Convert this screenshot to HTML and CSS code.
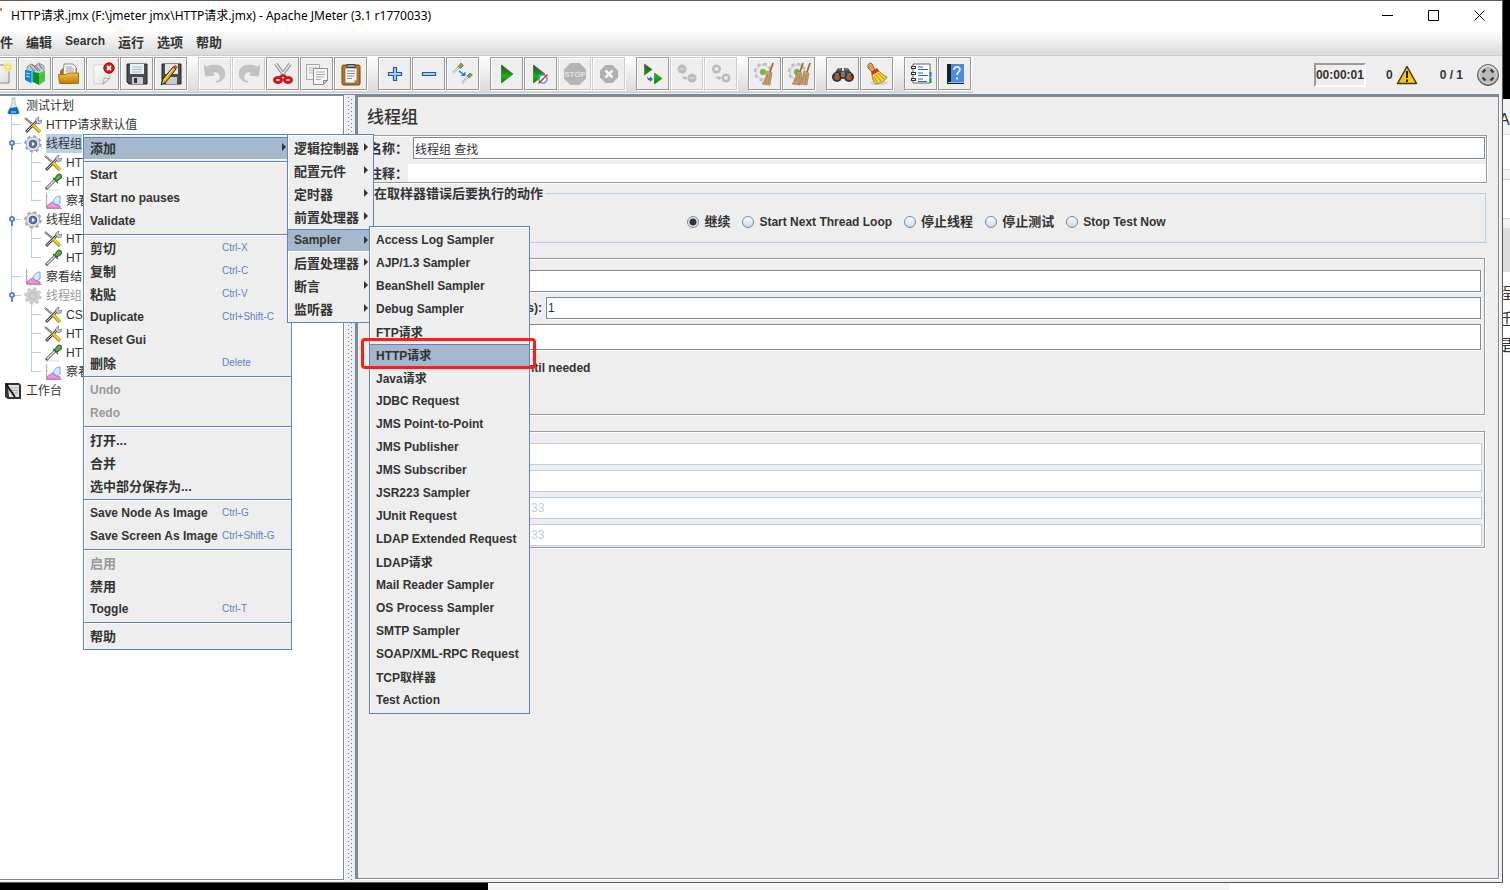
FILE: index.html
```html
<!DOCTYPE html>
<html lang="zh-CN">
<head>
  <meta charset="UTF-8">
  <meta name="viewport" content="width=device-width, initial-scale=1.0">
  <title>Apache JMeter</title>
  <link rel="stylesheet" href="styles.css">
</head>
<body>
  <svg class="sprite" aria-hidden="true">
    <defs>
      <linearGradient id="gGreen" x1="0" y1="0" x2="0" y2="1"><stop offset="0" stop-color="#1f5c22"/><stop offset=".5" stop-color="#2f8a2a"/><stop offset=".6" stop-color="#0cc40c"/><stop offset="1" stop-color="#067a06"/></linearGradient>
      <linearGradient id="gFolder" x1="0" y1="0" x2="0" y2="1"><stop offset="0" stop-color="#f0c14a"/><stop offset="1" stop-color="#b87a08"/></linearGradient>
      <linearGradient id="gPaper" x1="0" y1="0" x2="1" y2="1"><stop offset="0" stop-color="#fff"/><stop offset="1" stop-color="#dcdcdc"/></linearGradient>
      <linearGradient id="gMetal" x1="0" y1="0" x2="0" y2="1"><stop offset="0" stop-color="#e4e4e4"/><stop offset="1" stop-color="#777"/></linearGradient>
      <pattern id="bumps" width="6" height="4" patternUnits="userSpaceOnUse"><path d="M0 0h1v1H0zM3 2h1v1H3z" fill="#7a8a99"/></pattern>
    </defs>

    <symbol id="new" viewBox="0 0 24 24">
      <path d="M3 3h17v18H3z" fill="url(#gPaper)" stroke="#888"/>
      <circle cx="19" cy="5" r="4.500" fill="#f6ec86"/><circle cx="19" cy="5" r="2" fill="#fff" stroke="#e6cf3c"/>
    </symbol>
    <symbol id="templates" viewBox="0 0 24 24">
      <path d="M4 5l4-3 4 2 4-3 5 3v8H4z" fill="#c5cacc" stroke="#868e92"/>
      <path d="M7 4l4 5M12 3l5 6M9 2l6 7M16 2l3 5" stroke="#6f777b" fill="none"/>
      <path d="M2 8l6 1v12l-6-3z" fill="#0c84cf"/><path d="M8 9l4-2v12l-4 2z" fill="#40b4ee"/>
      <path d="M3 11l4 1M3 14l4 1" stroke="#bde6fa"/>
      <path d="M10 10l6 1v12l-6-3z" fill="#148a20"/><path d="M16 11l6-2v10l-6 4z" fill="#49c640"/>
    </symbol>
    <symbol id="open" viewBox="0 0 24 24">
      <path d="M3 9l3-3h14v12H3z" fill="#a97008"/>
      <path d="M7 2h9l3 3v9H6z" fill="#fafafa" stroke="#888"/>
      <path d="M9 5h6M9 7h8M8 9h9" stroke="#999"/>
      <path d="M1.500 12.500h7l2-1.500h11v10.500h-19z" fill="url(#gFolder)" stroke="#a97008"/>
    </symbol>
    <symbol id="close" viewBox="0 0 24 24">
      <path d="M3 3h16v13l-6 6H3z" fill="url(#gPaper)" stroke="#c4c4c4" stroke-width=".7"/>
      <path d="M12 22c1-2 1-4 1-6 2 1 4 1 6 0z" fill="#fff" stroke="#888" stroke-width=".7"/>
      <circle cx="18" cy="6" r="5.200" fill="#cf2018" stroke="#961009"/>
      <path d="M16 4l4 4M20 4l-4 4" stroke="#fff" stroke-width="1.800"/>
    </symbol>
    <symbol id="save" viewBox="0 0 24 24">
      <path d="M2 2h20v20H4l-2-2z" fill="#4a4e52" stroke="#26282a"/>
      <path d="M5 2h14v10H5z" fill="#e9f0f7"/><path d="M7 5h10M7 7.500h10M7 10h10" stroke="#a8bccf"/>
      <path d="M7 15h11v7H7z" fill="#c8cacc"/><path d="M9 16h3v5H9z" fill="#333"/>
    </symbol>
    <symbol id="saveAs" viewBox="0 0 24 24">
      <path d="M3 2h19v20H4l-1-2z" fill="#4a4e52" stroke="#26282a"/>
      <path d="M6 2h13v10H6z" fill="#dfe5ea"/><path d="M7 15h11v7H7z" fill="#c8cacc"/>
      <path d="M2 23l2-6L14 5l3 2L7 20z" fill="#e4ae16" stroke="#3c2b08"/>
      <path d="M14 5l2-2 3 2-2 2z" fill="#d63c22"/><path d="M5 18l9-11" stroke="#fbe38a"/>
    </symbol>
    <symbol id="undo" viewBox="0 0 24 24">
      <path d="M1.500 3l2 2.500C7 3 12 2.500 17 4c5 2 6 9 3 13-2 2-4 3-7 3 4-2 5-4 4-7-1-3-5-4-8-2l2.500 2-9 1z" fill="#c3c3c3" stroke="#b4b4b4" stroke-width=".7"/>
    </symbol>
    <symbol id="cut" viewBox="0 0 24 24">
      <path d="M5 2l10 14M19 2L9 16" stroke="#888" stroke-width="3.500"/><path d="M5 2l10 14M19 2L9 16" stroke="#e8e8e8" stroke-width="1.500"/>
      <path d="M9 15l3-2 3 2" fill="none" stroke="#c51017" stroke-width="2"/>
      <ellipse cx="7" cy="18" rx="3.500" ry="2.500" fill="none" stroke="#d3141b" stroke-width="3"/><ellipse cx="17" cy="18" rx="3.500" ry="2.500" fill="none" stroke="#d3141b" stroke-width="3"/>
    </symbol>
    <symbol id="copy" viewBox="0 0 24 24">
      <path d="M1.500 2.500h13v15h-13z" fill="#f1f1f1" stroke="#aaa"/><path d="M4 6h8M4 8.500h5M4 11h4" stroke="#bbb"/>
      <path d="M8.500 6.500h14v12l-4 4h-10z" fill="#f7f7f7" stroke="#8f8f8f"/><path d="M11 10h9M11 12.500h9M11 15h8M11 17.500h5" stroke="#aaa"/>
      <path d="M18.500 22.500v-4h4z" fill="#ccc" stroke="#888"/>
    </symbol>
    <symbol id="paste" viewBox="0 0 24 24">
      <rect x="3" y="3" width="18" height="20" rx="1.500" fill="#b9781c" stroke="#6e4508"/>
      <path d="M6 6h12v12l-3 3H6z" fill="#f6f6f6" stroke="#666" stroke-width=".7"/>
      <path d="M8 9h8M8 11.500h8M8 14h7M8 16.500h5" stroke="#888"/><path d="M15 21v-3h3z" fill="#bbb"/>
      <path d="M8 2.500h8v3H8z" fill="#999" stroke="#444"/>
    </symbol>
    <symbol id="plus" viewBox="0 0 24 24"><path d="M10.500 5.500h3v5h5v3h-5v5h-3v-5h-5v-3h5z" fill="#a9d3f5" stroke="#28589c" stroke-width="1.200"/></symbol>
    <symbol id="minus" viewBox="0 0 24 24"><path d="M5.500 10.500h13v3h-13z" fill="#a9d3f5" stroke="#28589c" stroke-width="1.200"/></symbol>
    <symbol id="toggle" viewBox="0 0 24 24">
      <path d="M2 11l6-6" stroke="#aaa" stroke-width="2.200"/><path d="M2 11l6-6" stroke="#f4f4f4"/>
      <path d="M7 4.500l3-3.500 2.500 2.500-3 3z" fill="#74a860" stroke="#4c7e3c" stroke-width=".7"/>
      <path d="M11 21l6-6" stroke="#aaa" stroke-width="2.200"/><path d="M11 21l6-6" stroke="#f4f4f4"/><path d="M16 14l3-3 2.500 2-3.500 3z" fill="#74a860" stroke="#4c7e3c" stroke-width=".7"/>
      <path d="M8 9l4 3" stroke="#2178f0" stroke-width="1.500"/><path d="M14.500 9.500v4.500h-5z" fill="#2178f0"/>
    </symbol>
    <symbol id="start" viewBox="0 0 24 24"><path d="M6.500 3v18L18 12z" fill="url(#gGreen)" stroke="#146414" stroke-width=".6"/></symbol>
    <symbol id="startNoPause" viewBox="0 0 24 24">
      <path d="M4.500 3v18L16 12z" fill="url(#gGreen)" stroke="#146414" stroke-width=".6"/>
      <circle cx="14" cy="17" r="4" fill="#fff" stroke="#5c9bdc" stroke-width="1.600"/><path d="M9.500 21.500l9-9" stroke="#cf2830" stroke-width="1.500"/>
    </symbol>
    <symbol id="shutdown" viewBox="0 0 24 24">
      <path d="M8.500 3h7L21 8.500v7L15.500 21h-7L3 15.500v-7z" fill="#b0b0b0"/><path d="M8.500 8.500l7 7M15.500 8.500l-7 7" stroke="#f4f4f4" stroke-width="2.600"/>
    </symbol>
    <symbol id="remoteStart" viewBox="0 0 24 24">
      <path d="M3.500 2v11l7.500-5.500zM13.500 11v11l7.500-5.500z" fill="url(#gGreen)" stroke="#146414" stroke-width=".5"/>
      <path d="M6 14l1 2h2v-1.500l3 2.500-3 3v-1.500c-2 0-3-1.500-3-4.500z" fill="#3d68b4"/>
    </symbol>
    <symbol id="remoteStop" viewBox="0 0 24 24">
      <circle cx="7" cy="7" r="4.500" fill="#bcbcbc"/><circle cx="17" cy="16" r="4.500" fill="#bcbcbc"/>
      <path d="M4.500 7h5M14.500 16h5" stroke="#d0d0d0" stroke-width="2"/><path d="M7 13l1 2h2v-1l2.500 2-2.500 2v-1c-2 0-3-1-3-4z" fill="#b6b6b6"/>
    </symbol>
    <symbol id="remoteShut" viewBox="0 0 24 24">
      <circle cx="7.500" cy="7" r="4.500" fill="#bcbcbc"/><circle cx="17" cy="16" r="4.500" fill="#bcbcbc"/>
      <path d="M6 5.500l3 3M9 5.500l-3 3M15.500 14.500l3 3M18.500 14.500l-3 3" stroke="#f2f2f2" stroke-width="1.500"/><path d="M7 13l1 2h2v-1l2.500 2-2.500 2v-1c-2 0-3-1-3-4z" fill="#b6b6b6"/>
    </symbol>
    <symbol id="gearGrey" viewBox="0 0 24 24">
      <circle cx="10" cy="10" r="7.500" fill="none" stroke="#bdbdbd" stroke-width="3.500" stroke-dasharray="3.200 2.690"/>
      <circle cx="10" cy="10" r="7" fill="#ececec" stroke="#c4c4c4"/><circle cx="10" cy="10" r="3" fill="#6bc41c" stroke="#a8a8a8" stroke-width=".7"/>
    </symbol>
    <symbol id="broomBrown" viewBox="0 0 24 24">
      <path d="M20 1l-3 9" stroke="#a56b34" stroke-width="1.800"/>
      <path d="M14 9l5 2-2 12-8-1c3-3 4-7 5-13z" fill="#c8a172" stroke="#8d6437" stroke-width=".5"/>
      <path d="M15 12l-3 9M17 12l-2 10" stroke="#a47c4a" stroke-width=".8"/>
    </symbol>
    <symbol id="clear" viewBox="0 0 24 24"><use href="#gearGrey"/><use href="#broomBrown"/></symbol>
    <symbol id="clearAll" viewBox="0 0 24 24"><use href="#gearGrey"/><use href="#broomBrown" x="-4"/><use href="#broomBrown" x="3"/></symbol>
    <symbol id="search" viewBox="0 0 24 24">
      <path d="M7 6h4v3h2V6h4l4 6v5H3v-5z" fill="#4a4a4a"/>
      <circle cx="6" cy="15" r="5" fill="#353535"/><circle cx="18" cy="15" r="5" fill="#353535"/>
      <circle cx="6" cy="15.500" r="2.700" fill="#a9592c"/><circle cx="18" cy="15.500" r="2.700" fill="#a9592c"/>
      <path d="M7 7h3M14 7h3M4 12h4M16 12h4" stroke="#aaa"/><path d="M10 10h4v5h-4z" fill="#777"/>
    </symbol>
    <symbol id="searchReset" viewBox="0 0 24 24">
      <ellipse cx="14" cy="21" rx="9" ry="2" fill="#d2d2d2"/>
      <path d="M3 3c1-3 5-2 5 1l2 4-3 2-4-4z" fill="#dca04c" stroke="#93601d"/>
      <path d="M7 12l6-4c3 3 5 5 9 7-2 4-6 6-11 7-3-3-4-6-4-10z" fill="#f2d13b" stroke="#a78313"/>
      <path d="M6 10l6-4 2 3-7 4z" fill="#d92c26"/><path d="M11 13l5 6M13 11l6 6M9 15l3 5" stroke="#b08c18"/>
    </symbol>
    <symbol id="funcHelper" viewBox="0 0 24 24">
      <path d="M4 2h17v19H4z" fill="#fff" stroke="#666"/>
      <path d="M2 5.500h5M2 11.500h5M2 17.500h5" stroke="#333" stroke-width="2.800"/><path d="M3 5.500h3M3 11.500h3M3 17.500h3" stroke="#fff"/>
      <path d="M9 5h5M9 7.500h10M9 11h5M9 13.500h10M9 17h5M9 19.500h9" stroke="#1d66cb"/>
      <path d="M21.500 10v5" stroke="#2b73e0" stroke-width="2"/><path d="M21.500 16v5" stroke="#169a2b" stroke-width="2"/>
    </symbol>
    <symbol id="help" viewBox="0 0 24 24">
      <path d="M4 2h17v20H4z" fill="#1c2024"/><path d="M8 2h13v18H8z" fill="#4c8ddf"/><path d="M5 20.500h16" stroke="#9fb9dc"/>
      <path d="M11 8c0-4 6-4 6-.5 0 2.500-3 2.500-3 5.500M14 15.500v2" fill="none" stroke="#e8f2fd" stroke-width="1.700"/>
    </symbol>
    <symbol id="warning" viewBox="0 0 22 20">
      <path d="M11 1.500l9.500 17h-19z" fill="#f8c80c" stroke="#3c3520" stroke-width="1.500" stroke-linejoin="round"/>
      <path d="M11 6v7M11 14.500v2.500" stroke="#222" stroke-width="2"/>
    </symbol>
    <symbol id="remoteState" viewBox="0 0 24 24">
      <circle cx="12" cy="12" r="10.500" fill="url(#gMetal)" stroke="#5f5f5f"/><circle cx="12" cy="12" r="8.500" fill="#b9b9b9" stroke="#ddd"/>
      <path d="M6.500 9.500l3-3M14.500 6.500l3 3M17.500 14.500l-3 3M9.500 17.500l-3-3" stroke="#3c3c3c" stroke-width="2.400"/>
    </symbol>

    <symbol id="flask" viewBox="0 0 18 18">
      <path d="M8 1v6L4 14.500C3.500 16 4 17 5 17h9c1 0 1.500-1 1-2.500L11 7V1z" fill="#e3e9f0" stroke="#a0abb8" stroke-width=".8"/>
      <path d="M6 11l7-1 2 5c0 1-.5 2-1.500 2h-8c-1 0-2-1-1.500-2z" fill="#1767c8"/><path d="M7 15h5" stroke="#51b4f5" stroke-width="2"/>
    </symbol>
    <symbol id="tools" viewBox="0 0 18 18">
      <path d="M2 16L13 5" stroke="#444" stroke-width="2.800"/><path d="M2.500 15.500L13 5" stroke="#ccc"/>
      <path d="M12 6c-1-2 0-4 3-5l-1 3 1 1 3-1c0 3-2 4-4 3.500z" fill="#ccc" stroke="#555" stroke-width=".6"/>
      <path d="M1 2l7 6" stroke="#555" stroke-width="2"/><path d="M1 2l7 6" stroke="#ddd" stroke-width=".8"/>
      <path d="M9 9l7 7" stroke="#b88a0a" stroke-width="3.600"/><path d="M9 8.500l7 7" stroke="#f3cc26" stroke-width="2"/>
    </symbol>
    <symbol id="gear" viewBox="0 0 18 18">
      <circle cx="9" cy="9" r="7.300" fill="none" stroke="#a4aab1" stroke-width="3" stroke-dasharray="3 2.730"/>
      <circle cx="9" cy="9" r="6.800" fill="#e2e4e7" stroke="#a9afb6"/><circle cx="9" cy="9" r="3.800" fill="#5c7fae" stroke="#3c557a"/><path d="M8 7v4l3-2z" fill="#fff"/>
    </symbol>
    <symbol id="gearOff" viewBox="0 0 18 18">
      <circle cx="9" cy="9" r="7.300" fill="none" stroke="#c8c8c8" stroke-width="3" stroke-dasharray="3 2.730"/>
      <circle cx="9" cy="9" r="7" fill="#cecece"/><circle cx="9" cy="9" r="3.500" fill="#d0d0d0" stroke="#b8b8b8"/>
    </symbol>
    <symbol id="pipette" viewBox="0 0 18 18">
      <path d="M1 17h14" stroke="#ddd"/><path d="M2 16L11 7" stroke="#555" stroke-width="3"/><path d="M3 15l8-8" stroke="#e8e8e8" stroke-width="1.400"/>
      <path d="M9 5l5 5M10.500 6l3-4c2-2 5 0 3.500 3l-4 3z" fill="#64ac57" stroke="#2f6a2c" stroke-width="1.200"/>
    </symbol>
    <symbol id="graph" viewBox="0 0 18 18">
      <path d="M2.500 1v15.500H18" fill="none" stroke="#aaa"/><path d="M1 4h3M1 8h3M1 12h3M7 15v3M11 15v3M15 15v3" stroke="#ccc"/>
      <path d="M3 14l5-4 4 3 4 1v2H3z" fill="#ef97da" stroke="#cf62b7"/><path d="M9 10c1-4 4-6 7-6v7l-3 2z" fill="#d6ebfb" stroke="#74a8dc"/>
    </symbol>
    <symbol id="workbench" viewBox="0 0 18 18">
      <path d="M1 1h14l2 2v14H4l-3-2z" fill="#333"/><path d="M4 3h11v12H5z" fill="#dfe2e5"/>
      <path d="M7 6h7M7 8.500h7M8 11h6" stroke="#aab"/><path d="M2 2l9 13" stroke="#111" stroke-width="1.800"/>
    </symbol>
    <symbol id="handle" viewBox="0 0 11 19">
      <path d="M3 11v5" stroke="#6382bf" stroke-width="2"/><circle cx="3" cy="9" r="2" fill="#fff" stroke="#6382bf" stroke-width="2"/>
    </symbol>
  </svg>

  <div class="window">
    <header class="title-bar">
      <span class="app-speck"></span>
      <h1>HTTP请求.jmx (F:\jmeter jmx\HTTP请求.jmx) - Apache JMeter (3.1 r1770033)</h1>
      <div class="window-controls">
        <button aria-label="Minimize"><svg viewBox="0 0 11 11"><path d="M0 5.500h11"/></svg></button>
        <button aria-label="Maximize"><svg viewBox="0 0 11 11"><path d="M.5.5h10v10H.5z"/></svg></button>
        <button aria-label="Close"><svg viewBox="0 0 11 11"><path d="M.5.500l10 10M10.500.5l-10 10"/></svg></button>
      </div>
    </header>

    <nav class="menu-bar">
      <button class="zh">件</button>
      <button class="zh">编辑</button>
      <button>Search</button>
      <button class="zh">运行</button>
      <button class="zh">选项</button>
      <button class="zh">帮助</button>
    </nav>

    <div class="tool-row">
      <div class="toolbar">
        <div class="tool-group">
          <button aria-label="New"><svg><use href="#new"/></svg></button>
          <button aria-label="Templates"><svg><use href="#templates"/></svg></button>
          <button aria-label="Open"><svg><use href="#open"/></svg></button>
          <button aria-label="Close plan"><svg><use href="#close"/></svg></button>
          <button aria-label="Save"><svg><use href="#save"/></svg></button>
          <button aria-label="Save as"><svg><use href="#saveAs"/></svg></button>
        </div>
        <div class="tool-group">
          <button aria-label="Undo" disabled><svg><use href="#undo"/></svg></button>
          <button aria-label="Redo" disabled><svg class="flip"><use href="#undo"/></svg></button>
          <button aria-label="Cut"><svg><use href="#cut"/></svg></button>
          <button aria-label="Copy"><svg><use href="#copy"/></svg></button>
          <button aria-label="Paste"><svg><use href="#paste"/></svg></button>
        </div>
        <div class="tool-group">
          <button aria-label="Expand all"><svg><use href="#plus"/></svg></button>
          <button aria-label="Collapse all"><svg><use href="#minus"/></svg></button>
          <button aria-label="Toggle"><svg><use href="#toggle"/></svg></button>
        </div>
        <div class="tool-group">
          <button aria-label="Start"><svg><use href="#start"/></svg></button>
          <button aria-label="Start no pauses"><svg><use href="#startNoPause"/></svg></button>
          <button aria-label="Stop" disabled>
            <svg viewBox="0 0 24 24">
              <path d="M7.500 1h9L23 7.500v9L16.500 23h-9L1 16.500v-9z" fill="#b5b5b5"/>
              <text x="12" y="15" text-anchor="middle" class="stop-text">STOP</text>
            </svg>
          </button>
          <button aria-label="Shutdown" disabled><svg><use href="#shutdown"/></svg></button>
        </div>
        <div class="tool-group">
          <button aria-label="Remote start all"><svg><use href="#remoteStart"/></svg></button>
          <button aria-label="Remote stop all" disabled><svg><use href="#remoteStop"/></svg></button>
          <button aria-label="Remote shutdown all" disabled><svg><use href="#remoteShut"/></svg></button>
        </div>
        <div class="tool-group">
          <button aria-label="Clear"><svg><use href="#clear"/></svg></button>
          <button aria-label="Clear all"><svg><use href="#clearAll"/></svg></button>
        </div>
        <div class="tool-group">
          <button aria-label="Search"><svg><use href="#search"/></svg></button>
          <button aria-label="Reset search"><svg><use href="#searchReset"/></svg></button>
        </div>
        <div class="tool-group">
          <button aria-label="Function helper"><svg><use href="#funcHelper"/></svg></button>
          <button aria-label="Help"><svg><use href="#help"/></svg></button>
        </div>
      </div>
      <div class="status">
        <span class="timer">00:00:01</span>
        <span class="errors">0 <svg><use href="#warning"/></svg></span>
        <span class="threads">0 / 1</span>
        <svg class="remote-state"><use href="#remoteState"/></svg>
      </div>
    </div>

    <div class="split">
      <ul class="tree">
        <li><svg class="node"><use href="#flask"/></svg><span>测试计划</span></li>
        <li class="child"><i class="guide tee"></i><svg class="node"><use href="#tools"/></svg><span>HTTP请求默认值</span></li>
        <li class="child"><i class="guide tee"><svg><use href="#handle"/></svg></i><svg class="node"><use href="#gear"/></svg><span class="selected">线程组</span></li>
        <li class="child"><i class="guide pass"></i><i class="guide tee"></i><svg class="node"><use href="#tools"/></svg><span>HTTP</span></li>
        <li class="child"><i class="guide pass"></i><i class="guide tee"></i><svg class="node"><use href="#pipette"/></svg><span>HTTP</span></li>
        <li class="child"><i class="guide pass"></i><i class="guide last"></i><svg class="node"><use href="#graph"/></svg><span>察看</span></li>
        <li class="child"><i class="guide tee"><svg><use href="#handle"/></svg></i><svg class="node"><use href="#gear"/></svg><span>线程组</span></li>
        <li class="child"><i class="guide pass"></i><i class="guide tee"></i><svg class="node"><use href="#tools"/></svg><span>HTTP</span></li>
        <li class="child"><i class="guide pass"></i><i class="guide last"></i><svg class="node"><use href="#pipette"/></svg><span>HTTP</span></li>
        <li class="child"><i class="guide tee"></i><svg class="node"><use href="#graph"/></svg><span>察看结</span></li>
        <li class="child"><i class="guide last"><svg><use href="#handle"/></svg></i><svg class="node"><use href="#gearOff"/></svg><span class="off">线程组</span></li>
        <li class="child"><i class="guide pass none"></i><i class="guide tee"></i><svg class="node"><use href="#tools"/></svg><span>CSV</span></li>
        <li class="child"><i class="guide pass none"></i><i class="guide tee"></i><svg class="node"><use href="#tools"/></svg><span>HTTP</span></li>
        <li class="child"><i class="guide pass none"></i><i class="guide tee"></i><svg class="node"><use href="#pipette"/></svg><span>HTTP</span></li>
        <li class="child"><i class="guide pass none"></i><i class="guide last"></i><svg class="node"><use href="#graph"/></svg><span>察看</span></li>
        <li><svg class="node"><use href="#workbench"/></svg><span>工作台</span></li>
      </ul>

      <div class="divider"><svg><rect width="5" height="100%" fill="url(#bumps)"/></svg></div>

      <main class="editor">
        <h2>线程组</h2>
        <div class="name-panel">
          <div class="name-row">
            <label for="name">名称：</label>
            <input type="text" id="name" value="线程组 查找">
          </div>
          <div class="comment-row">
            <label for="comment">注释：</label>
            <input type="text" id="comment">
          </div>
        </div>

        <fieldset class="on-error">
          <legend>在取样器错误后要执行的动作</legend>
          <div class="radios">
            <label class="zh"><input type="radio" name="onError" checked>继续</label>
            <label><input type="radio" name="onError">Start Next Thread Loop</label>
            <label class="zh"><input type="radio" name="onError">停止线程</label>
            <label class="zh"><input type="radio" name="onError">停止测试</label>
            <label><input type="radio" name="onError">Stop Test Now</label>
          </div>
        </fieldset>

        <section class="group threads-group">
          <div class="field"><input type="text" aria-label="线程数"></div>
          <div class="field"><label for="ramp">Ramp-Up Period (in seconds):</label><input type="text" id="ramp" value="1"></div>
          <div class="field tall"><input type="text" aria-label="循环次数"></div>
          <label class="check"><input type="checkbox">Delay Thread creation until needed</label>
        </section>

        <section class="group schedule-group">
          <input type="text" aria-label="Duration" disabled>
          <input type="text" aria-label="Startup delay" disabled>
          <input type="text" aria-label="Start time" value="33" disabled>
          <input type="text" aria-label="End time" value="33" disabled>
        </section>
      </main>
    </div>
  </div>

  <aside class="behind-right">
    <div class="black"></div>
    <div class="tab">A</div>
    <div class="blank"></div>
    <div class="bar"></div>
    <div class="box"></div>
    <div class="thumb"></div>
    <p>程</p>
    <p>迁</p>
    <p>是</p>
  </aside>
  <div class="behind-bottom"></div>

  <ul class="popup context-menu">
    <li><button class="zh active more">添加</button></li>
    <li class="sep"></li>
    <li><button>Start</button></li>
    <li><button>Start no pauses</button></li>
    <li><button>Validate</button></li>
    <li class="sep"></li>
    <li><button class="zh">剪切<kbd>Ctrl-X</kbd></button></li>
    <li><button class="zh">复制<kbd>Ctrl-C</kbd></button></li>
    <li><button class="zh">粘贴<kbd>Ctrl-V</kbd></button></li>
    <li><button>Duplicate<kbd>Ctrl+Shift-C</kbd></button></li>
    <li><button>Reset Gui</button></li>
    <li><button class="zh">删除<kbd>Delete</kbd></button></li>
    <li class="sep"></li>
    <li><button disabled>Undo</button></li>
    <li><button disabled>Redo</button></li>
    <li class="sep"></li>
    <li><button class="zh">打开...</button></li>
    <li><button class="zh">合并</button></li>
    <li><button class="zh">选中部分保存为...</button></li>
    <li class="sep"></li>
    <li><button>Save Node As Image<kbd>Ctrl-G</kbd></button></li>
    <li><button>Save Screen As Image<kbd>Ctrl+Shift-G</kbd></button></li>
    <li class="sep"></li>
    <li><button class="zh" disabled>启用</button></li>
    <li><button class="zh">禁用</button></li>
    <li><button>Toggle<kbd>Ctrl-T</kbd></button></li>
    <li class="sep"></li>
    <li><button class="zh">帮助</button></li>
  </ul>

  <ul class="popup add-menu">
    <li><button class="zh more">逻辑控制器</button></li>
    <li><button class="zh more">配置元件</button></li>
    <li><button class="zh more">定时器</button></li>
    <li><button class="zh more">前置处理器</button></li>
    <li><button class="more active">Sampler</button></li>
    <li><button class="zh more">后置处理器</button></li>
    <li><button class="zh more">断言</button></li>
    <li><button class="zh more">监听器</button></li>
  </ul>

  <ul class="popup sampler-menu">
    <li><button>Access Log Sampler</button></li>
    <li><button>AJP/1.3 Sampler</button></li>
    <li><button>BeanShell Sampler</button></li>
    <li><button>Debug Sampler</button></li>
    <li><button>FTP请求</button></li>
    <li><button class="active">HTTP请求</button></li>
    <li><button>Java请求</button></li>
    <li><button>JDBC Request</button></li>
    <li><button>JMS Point-to-Point</button></li>
    <li><button>JMS Publisher</button></li>
    <li><button>JMS Subscriber</button></li>
    <li><button>JSR223 Sampler</button></li>
    <li><button>JUnit Request</button></li>
    <li><button>LDAP Extended Request</button></li>
    <li><button>LDAP请求</button></li>
    <li><button>Mail Reader Sampler</button></li>
    <li><button>OS Process Sampler</button></li>
    <li><button>SMTP Sampler</button></li>
    <li><button>SOAP/XML-RPC Request</button></li>
    <li><button>TCP取样器</button></li>
    <li><button>Test Action</button></li>
  </ul>
  <div class="highlight"></div>
</body>
</html>
```
FILE: styles.css
```css
* {
    box-sizing: border-box;
}

body {
    margin: 0;
    height: 100vh;
    overflow: hidden;
    position: relative;
    display: grid;
    grid-template-columns: 1fr 7px;
    grid-template-rows: 1fr 7px;
    font-family: "Liberation Sans", "Noto Sans CJK SC", sans-serif;
    font-size: 12px;
    color: #333;
    background: #fff;
}

button, input {
    font: inherit;
    color: inherit;
}

button {
    border: 0;
    padding: 0;
    background: none;
}

ul {
    list-style: none;
    margin: 0;
    padding: 0;
}

.zh {
    font-size: 13px;
}

.sprite {
    position: absolute;
    width: 0;
    height: 0;
}

.stop-text {
    font-size: 8px;
    font-weight: bold;
    fill: #e2e2e2;
}

/* window frame */
.window {
    display: flex;
    flex-direction: column;
    min-width: 0;
    min-height: 0;
    overflow: hidden;
    background: #eee;
    border: 1px solid #5a5a5a;
    border-left: 0;
}

.title-bar {
    display: flex;
    align-items: center;
    height: 29px;
    background: #fff;
}

.title-bar h1 {
    flex: 1;
    margin: 0 0 0 9px;
    font-family: "Noto Sans", "Noto Sans CJK SC", sans-serif;
    font-size: 12px;
    font-weight: normal;
    line-height: 20px;
    color: #000;
}

.app-speck {
    width: 2px;
    height: 3px;
    margin-bottom: 13px;
    background: #e08a2c;
}

.window-controls {
    display: flex;
}

.window-controls button {
    display: flex;
    align-items: center;
    justify-content: center;
    width: 46px;
    height: 28px;
}

.window-controls svg {
    width: 11px;
    height: 11px;
    fill: none;
    stroke: #000;
}

.menu-bar {
    display: flex;
    align-items: center;
    gap: 13px;
    height: 26px;
    padding-bottom: 3px;
    background: linear-gradient(#fff, #dadada);
    border-bottom: 1px solid #ccc;
}

.menu-bar button {
    font-weight: bold;
}

/* toolbar */
.tool-row {
    display: flex;
    justify-content: space-between;
    height: 38px;
}

.toolbar {
    display: flex;
    gap: 11px;
    height: 37px;
    margin-left: -16px;
    padding: 1px 2px 0 0;
    background: linear-gradient(#fff, #dadada);
    border-bottom: 1px solid #ccc;
}

.tool-group {
    display: flex;
    gap: 1px;
}

.tool-group button {
    display: flex;
    align-items: center;
    justify-content: center;
    width: 33px;
    height: 33px;
    background: #eee;
    border: 1px solid #999;
    box-shadow: 1px 1px #fff, inset 1px 1px #fff;
}

.tool-group button:disabled {
    border-color: #ccc;
}

.tool-group svg {
    width: 24px;
    height: 24px;
}

.flip {
    transform: scaleX(-1);
}

.status {
    display: flex;
    align-items: center;
    padding-right: 2px;
    font-weight: bold;
}

.timer {
    padding: 2px 0;
    line-height: 16px;
    border: 2px solid;
    border-color: #999 #fff #fff #999;
}

.errors {
    display: flex;
    align-items: center;
    gap: 3px;
    margin-left: 20px;
}

.errors svg {
    width: 22px;
    height: 20px;
}

.threads {
    margin-left: 22px;
}

.remote-state {
    width: 24px;
    height: 24px;
    margin-left: 13px;
}

/* tree */
.split {
    display: flex;
    flex: 1;
    min-height: 0;
}

.tree {
    width: 344px;
    margin-bottom: 2px;
    background: #fff;
    border: 1px solid #7a8a99;
    border-top-width: 2px;
    border-left: 0;
    box-shadow: 1px 1px #fff;
}

.tree li {
    display: flex;
    align-items: center;
    height: 19px;
    padding-left: 4px;
    white-space: nowrap;
}

.tree li.child {
    padding-left: 11px;
}

.node {
    width: 18px;
    height: 18px;
    margin-right: 4px;
}

.tree span {
    padding-top: 2px;
    line-height: 17px;
}

.selected {
    background: #b8cfe5;
}

.off {
    color: #999;
}

.guide {
    width: 13px;
    height: 19px;
    background-repeat: no-repeat;
    background-image: linear-gradient(#b8cfe5, #b8cfe5), linear-gradient(#b8cfe5, #b8cfe5);
    background-size: 1px 100%, 10px 1px;
    background-position: 0 0, 0 9px;
}

.guide.last {
    background-size: 1px 10px, 10px 1px;
}

.guide.pass {
    width: 20px;
    background-size: 1px 100%, 0 0;
}

.guide.none {
    background-image: none;
}

.guide svg {
    display: block;
    width: 11px;
    height: 19px;
    margin-left: -2px;
}

.divider {
    flex: none;
    width: 11px;
    padding: 2px 3px 2px 4px;
    border-top: 1px solid #7a8a99;
}

.divider svg {
    display: block;
    width: 4px;
    height: 100%;
}

/* thread group editor */
.editor {
    flex: 1;
    min-width: 0;
    margin: 0 3px 3px 0;
    padding: 0 11px 0 9px;
    border: 1px solid #7a8a99;
    border-width: 3px 1px 1px 3px;
    box-shadow: 1px 1px #fff;
}

.editor h2 {
    margin: 0;
    padding-top: 4px;
    font-size: 17px;
    font-weight: 500;
    line-height: 34px;
}

.editor label, .editor legend {
    font-weight: bold;
}

.editor input[type="text"] {
    min-width: 0;
    padding: 0 1px;
    background: #fff;
    border: 1px solid #7a8a99;
    border-radius: 0;
    box-shadow: 1px 1px #fff;
}

.name-panel {
    padding: 1px 0 0 1px;
    border: 1px solid #999;
    box-shadow: 1px 1px #fff, inset 1px 1px #fff;
}

.name-row, .comment-row {
    display: flex;
    align-items: center;
    font-size: 13px;
}

.name-panel label {
    padding-bottom: 2px;
}

.name-panel input {
    flex: 1;
    font-size: 12px;
}

.name-row {
    gap: 5px;
    height: 22px;
    padding-right: 1px;
}

.name-row input {
    height: 22px;
}

.comment-row {
    height: 18px;
    margin-top: 5px;
}

.editor .comment-row input {
    height: 18px;
    border: 0;
    box-shadow: none;
}

.on-error {
    min-width: 0;
    margin: 2px 1px 0 0;
    padding: 0;
    border: 1px solid #b8cfe5;
}

.on-error legend {
    margin-left: 4px;
    padding: 0 2px;
    font-size: 13px;
    line-height: 17px;
}

.radios {
    display: flex;
    align-items: center;
    justify-content: center;
    gap: 12px;
    height: 40px;
}

.radios label {
    display: flex;
    align-items: center;
    gap: 5px;
}

.radios .zh {
    line-height: 16px;
    padding-bottom: 1px;
}

input[type="radio"] {
    appearance: none;
    width: 12px;
    height: 12px;
    margin: 0;
    border: 1px solid #7a8a99;
    border-radius: 50%;
    background: linear-gradient(#fff, #c6d9ea);
}

input[type="radio"]:checked {
    background: radial-gradient(circle, #333 3px, #dde8f3 4px);
}

.group {
    display: flex;
    flex-direction: column;
    margin: 15px 2px 0 2px;
    padding: 11px 3px 0 0;
    border: 1px solid #999;
    box-shadow: 1px 1px #fff, inset 1px 1px #fff;
}

.threads-group {
    gap: 5px;
    height: 157px;
}

.field {
    display: flex;
    align-items: center;
    gap: 4px;
    height: 22px;
}

.field.tall {
    height: 26px;
}

.field input {
    flex: 1;
    align-self: stretch;
}

.check {
    display: flex;
    align-items: center;
    gap: 8px;
    margin-top: 4px;
    line-height: 18px;
}

.check input {
    margin: 0;
}

.schedule-group {
    gap: 5px;
    margin-top: 16px;
    padding: 11px 2px 1px;
}

.schedule-group input[type="text"] {
    height: 22px;
    padding-left: 158px;
    border-color: #b8cfe5;
    box-shadow: none;
    color: #b8cfe5;
}

/* what shows round the window */
.behind-right {
    overflow: hidden;
    font-size: 16px;
}

.behind-right .black {
    height: 99px;
    background: #000;
}

.behind-right .tab {
    height: 36px;
    line-height: 42px;
    text-indent: -4px;
    background: #f3f3f3;
    border-bottom: 1px solid #ddd;
}

.behind-right .blank {
    height: 35px;
    border-bottom: 1px solid #ddd;
}

.behind-right .bar {
    height: 10px;
    background: #f3f3f3;
    border-bottom: 1px solid #ccc;
}

.behind-right .box {
    height: 39px;
    border-bottom: 1px solid #ccc;
}

.behind-right .thumb {
    height: 53px;
    margin-bottom: 9px;
    background: #ddd;
    border-top: 9px solid #f3f3f3;
}

.behind-right p {
    margin: 0;
    line-height: 26px;
    text-indent: -6px;
}

.behind-bottom {
    grid-column: 1 / -1;
    background: linear-gradient(to right, #000 488px, #f4f4f4 488px, #f4f4f4 1229px, #fff 1229px);
}

/* popup menus */
.popup {
    position: absolute;
    padding: 2px 0 1px;
    background: #eee;
    border: 1px solid #6382bf;
    box-shadow: inset 1px 1px #fff;
}

.popup button {
    display: flex;
    align-items: center;
    justify-content: space-between;
    width: 100%;
    height: 23px;
    padding: 0 3px 2px 6px;
    font-weight: bold;
    text-align: left;
    white-space: nowrap;
    border-top: 1px solid transparent;
    border-bottom: 1px solid transparent;
}

.popup button.more {
    padding-right: 5px;
}

.popup button.zh {
    padding-bottom: 3px;
}

.popup button:disabled {
    color: #999;
}

.popup button.active {
    background: #a3b8cc;
    border-top-color: #6382bf;
    border-bottom-color: #fff;
}

.popup .more::after {
    content: "";
    border: 4px solid transparent;
    border-left-color: #333;
    border-right: 0;
}

.popup kbd {
    width: 66px;
    font-family: inherit;
    font-size: 10px;
    font-weight: normal;
    color: #6382bf;
}

.popup .sep {
    height: 4px;
    background: linear-gradient(#6382bf, #6382bf) 0 1px / 100% 1px no-repeat, linear-gradient(#fff, #fff) 0 2px / 100% 1px no-repeat;
}

.context-menu {
    left: 83px;
    top: 134px;
    width: 209px;
}

.add-menu {
    left: 287px;
    top: 134px;
    width: 87px;
}

.sampler-menu {
    left: 369px;
    top: 226px;
    width: 161px;
}

/* marks the sampler to pick */
.highlight {
    position: absolute;
    left: 361px;
    top: 338px;
    width: 175px;
    height: 31px;
    border: 3px solid #fe1f12;
    border-radius: 4px;
    pointer-events: none;
}
```
